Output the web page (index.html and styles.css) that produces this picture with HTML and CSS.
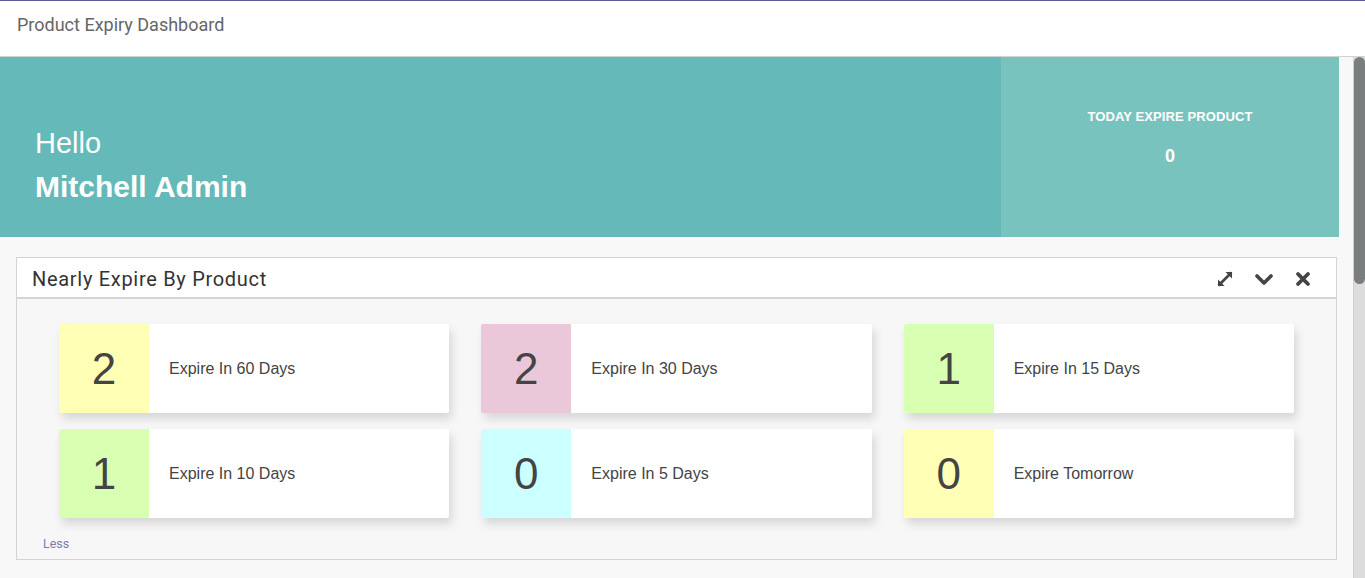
FILE: index.html
```html
<!DOCTYPE html>
<html>
<head>
<meta charset="utf-8">
<link rel="stylesheet" href="styles.css">
</head>
<body>
<header class="topbar">
  <div class="title">Product Expiry Dashboard</div>
</header>
<div class="viewport">
  <main class="content">
    <section class="banner">
      <div class="greeting">
        <div class="hello">Hello</div>
        <div class="user">Mitchell Admin</div>
      </div>
      <div class="today">
        <div class="today-label">TODAY EXPIRE PRODUCT</div>
        <div class="today-value">0</div>
      </div>
    </section>

    <section class="panel">
      <div class="panel-head">
        <div class="panel-title">Nearly Expire By Product</div>
        <div class="panel-tools">
          <svg class="tool" width="20" height="20" viewBox="0 0 20 20" aria-hidden="true">
            <path d="M3.5 16.5 L16.5 3.5" stroke="#444" stroke-width="2.6" fill="none"/>
            <path d="M10.5 3 H17 V9.5 Z" fill="#444"/>
            <path d="M3 10.5 V17 H9.5 Z" fill="#444"/>
          </svg>
          <svg class="tool" width="20" height="20" viewBox="0 0 20 20" aria-hidden="true">
            <path d="M3 7 L10 14 L17 7" stroke="#444" stroke-width="3.6" fill="none" stroke-linecap="round" stroke-linejoin="round"/>
          </svg>
          <svg class="tool" width="20" height="20" viewBox="0 0 20 20" aria-hidden="true">
            <path d="M5 5 L15 15 M15 5 L5 15" stroke="#444" stroke-width="3.8" fill="none" stroke-linecap="round"/>
          </svg>
        </div>
      </div>
      <div class="panel-body">
        <div class="cards">
          <div class="card"><div class="num yellow">2</div><div class="label">Expire In 60 Days</div></div>
          <div class="card"><div class="num pink">2</div><div class="label">Expire In 30 Days</div></div>
          <div class="card"><div class="num green">1</div><div class="label">Expire In 15 Days</div></div>
          <div class="card"><div class="num green">1</div><div class="label">Expire In 10 Days</div></div>
          <div class="card"><div class="num cyan">0</div><div class="label">Expire In 5 Days</div></div>
          <div class="card"><div class="num yellow">0</div><div class="label">Expire Tomorrow</div></div>
        </div>
        <a class="less" href="#">Less</a>
      </div>
    </section>
  </main>
  <div class="scrollbar" aria-hidden="true"><div class="thumb"></div></div>
</div>
</body>
</html>
```

FILE: styles.css
```css
* { box-sizing: border-box; }
html, body { margin: 0; padding: 0; height: 100%; }
body {
  font-family: "Liberation Sans", Arial, sans-serif;
  background: #f8f8f8;
  display: flex;
  flex-direction: column;
  overflow: hidden;
}
.topbar {
  height: 57px;
  flex: none;
  background: #fff;
  border-top: 1px solid #5d5b94;
  border-bottom: 1px solid #d2d2d2;
  display: flex;
  align-items: center;
  padding-left: 17px;
  padding-bottom: 9px;
}
.title {
  font-family: Roboto, "Liberation Sans", sans-serif;
  font-size: 18px;
  color: #666;
}
.viewport {
  flex: 1;
  display: flex;
  min-height: 0;
}
.content {
  flex: 1;
  overflow: hidden;
  background: #f8f8f8;
}
.scrollbar {
  width: 12px;
  flex: none;
  background: #dcdcdc;
  border-left: 1px solid #cfcfcf;
}
.thumb {
  height: 227px;
  background: #7a7e7f;
  border-radius: 6px;
}

.banner {
  display: flex;
  height: 180px;
  margin-right: 14px;
}
.greeting {
  flex: 1;
  background: #65b9b8;
  color: #fff;
  padding: 69px 0 0 35px;
}
.hello { font-size: 29px; line-height: 34px; }
.user { font-size: 30px; font-weight: bold; line-height: 34px; margin-top: 10px; }
.today {
  width: 338px;
  background: #78c3be;
  color: #fff;
  text-align: center;
  padding-top: 52px;
}
.today-label { font-size: 13px; font-weight: bold; letter-spacing: 0.1px; }
.today-value { font-size: 18px; font-weight: bold; margin-top: 22px; }

.panel {
  margin: 20px 16px 0 16px;
  border: 1px solid #d4d4d4;
  background: #f7f7f7;
}
.panel-head {
  height: 41px;
  background: #fff;
  border-bottom: 2px solid #d4d4d4;
  display: flex;
  align-items: center;
  justify-content: space-between;
  padding: 2px 23px 0 15px;
}
.panel-title {
  font-family: Roboto, "Liberation Sans", sans-serif;
  font-size: 20px;
  color: #333;
  letter-spacing: 0.7px;
}
.panel-tools { display: flex; gap: 19px; align-items: center; }
.tool { display: block; }
.panel-body {
  padding: 25px 42px 7px 42px;
  border-left: 1px solid #d4d4d4;
  border-right: 1px solid #d4d4d4;
  margin: 0 -1px;
}
.cards {
  display: grid;
  grid-template-columns: repeat(3, 1fr);
  column-gap: 32px;
  row-gap: 16px;
}
.card {
  height: 89px;
  background: #fff;
  display: flex;
  align-items: center;
  border-radius: 2px;
  box-shadow: 3px 6px 10px rgba(0,0,0,0.13);
}
.num {
  width: 90px;
  height: 89px;
  display: flex;
  align-items: center;
  justify-content: center;
  font-size: 44px;
  color: #444;
  border-radius: 2px 0 0 2px;
}
.yellow { background: #ffffb5; }
.pink { background: #eac8da; }
.green { background: #d9ffb3; }
.cyan { background: #ccffff; }
.label {
  padding-left: 20px;
  font-size: 16px;
  color: #444;
}
.less {
  display: inline-block;
  margin: 18px 0 0 -16px;
  font-family: Roboto, "Liberation Sans", sans-serif;
  font-size: 12.5px;
  color: #7c7bad;
  text-decoration: none;
}
```
